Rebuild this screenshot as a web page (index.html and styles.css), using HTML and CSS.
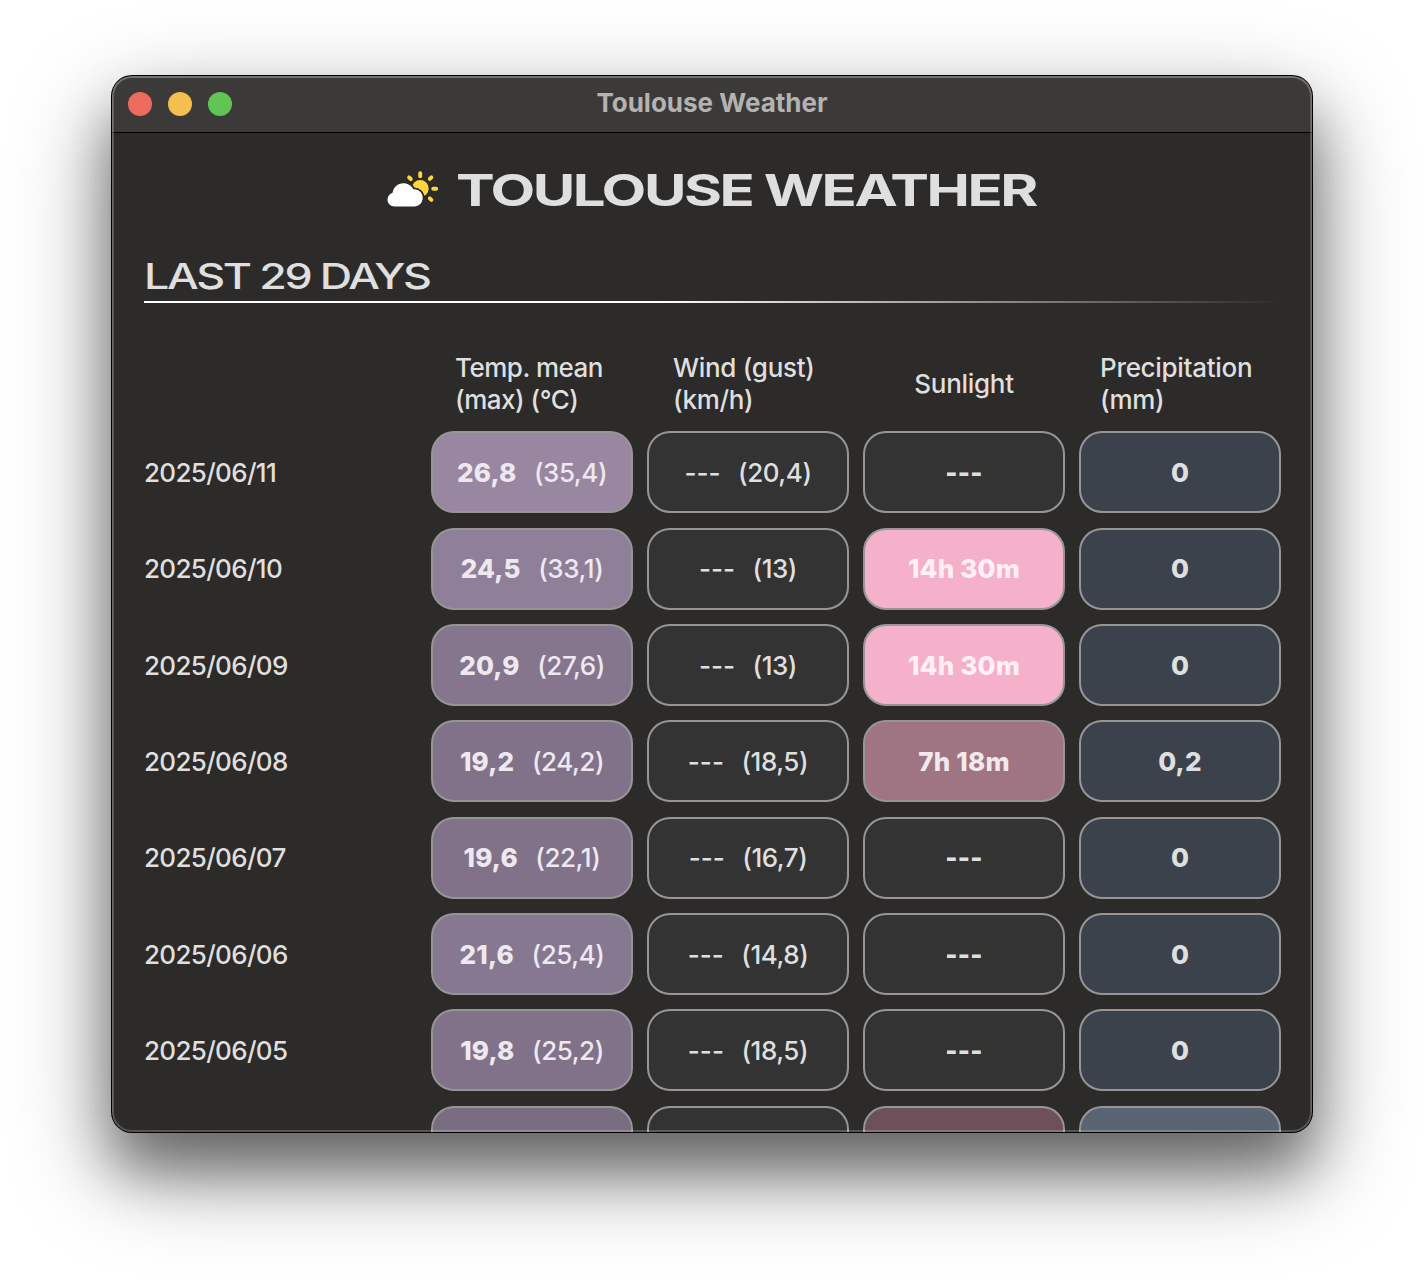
FILE: index.html
```
<!DOCTYPE html>
<html lang="en">
<head>
<meta charset="utf-8">
<title>Toulouse Weather</title>
<link rel="stylesheet" href="styles.css">
</head>
<body>
<main class="window">
  <header class="titlebar">
    <div class="lights"><i class="light close"></i><i class="light minimize"></i><i class="light expand"></i></div>
    <span class="window-title">Toulouse Weather</span>
  </header>
  <section class="content">
    <div class="hero">
      <svg class="hero-icon" width="52" height="38" viewBox="0 0 52 38">
        <g fill="#fcd53f" stroke="#fcd53f">
          <circle cx="33.200" cy="18.500" r="8.500" stroke="none"/>
          <path fill="none" stroke-width="3.900" stroke-linecap="round" d="M33.200 3.200v3M44.400 7.300l-1.600 1.600M46.200 18.700h3M42.800 28.300l1.600 1.600M22.100 7.300l1.700 1.700"/>
        </g>
        <path fill="#fff" stroke="#2c2b29" stroke-width="3.600" paint-order="stroke" d="M7.700 36.500C3.300 36.500.500 33.400.500 29.500c0-3.400 2.100-6 5.100-6.800C6.300 17.200 10.800 13.200 16.400 13.200c4.400 0 8.200 2.400 10 6.200 5.200-.5 9.300 3.400 9.300 8.400 0 4.900-3.700 8.700-8.500 8.700z"/>
      </svg>
      <h1 class="hero-title">TOULOUSE WEATHER</h1>
    </div>
    <div class="section-head"><h2 class="section-title">LAST 29 DAYS</h2></div>
    <div class="head row">
      <span></span>
      <span class="label temp-label">Temp. mean<br>(max) (°C)</span>
      <span class="label wind-label">Wind (gust)<br>(km/h)</span>
      <span class="label sun-label">Sunlight</span>
      <span class="label rain-label">Precipitation<br>(mm)</span>
    </div>
    <div class="days">
      <div class="row"><span class="date">2025/06/11</span><div class="cell t6"><b>26,8</b><span>(35,4)</span></div><div class="cell"><span class="dash">---</span><span>(20,4)</span></div><div class="cell"><b class="dash">---</b></div><div class="cell rain"><b>0</b></div></div>
      <div class="row"><span class="date">2025/06/10</span><div class="cell t5"><b>24,5</b><span>(33,1)</span></div><div class="cell"><span class="dash">---</span><span>(13)</span></div><div class="cell sun"><b>14h 30m</b></div><div class="cell rain"><b>0</b></div></div>
      <div class="row"><span class="date">2025/06/09</span><div class="cell t3"><b>20,9</b><span>(27,6)</span></div><div class="cell"><span class="dash">---</span><span>(13)</span></div><div class="cell sun"><b>14h 30m</b></div><div class="cell rain"><b>0</b></div></div>
      <div class="row"><span class="date">2025/06/08</span><div class="cell t2"><b>19,2</b><span>(24,2)</span></div><div class="cell"><span class="dash">---</span><span>(18,5)</span></div><div class="cell sun-mid"><b>7h 18m</b></div><div class="cell rain"><b>0,2</b></div></div>
      <div class="row"><span class="date">2025/06/07</span><div class="cell t2"><b>19,6</b><span>(22,1)</span></div><div class="cell"><span class="dash">---</span><span>(16,7)</span></div><div class="cell"><b class="dash">---</b></div><div class="cell rain"><b>0</b></div></div>
      <div class="row"><span class="date">2025/06/06</span><div class="cell t4"><b>21,6</b><span>(25,4)</span></div><div class="cell"><span class="dash">---</span><span>(14,8)</span></div><div class="cell"><b class="dash">---</b></div><div class="cell rain"><b>0</b></div></div>
      <div class="row"><span class="date">2025/06/05</span><div class="cell t2"><b>19,8</b><span>(25,2)</span></div><div class="cell"><span class="dash">---</span><span>(18,5)</span></div><div class="cell"><b class="dash">---</b></div><div class="cell rain"><b>0</b></div></div>
      <div class="row"><span></span><div class="cell t1"></div><div class="cell"></div><div class="cell sun-low"></div><div class="cell rain-mid"></div></div>
    </div>
  </section>
</main>
</body>
</html>
```
FILE: styles.css
```
* { box-sizing: border-box; }
html, body { height: 100%; overflow: hidden; }
body {
  margin: 0;
  padding: 76px 112px;
  background: #fff;
  font-family: Inter, "Liberation Sans", sans-serif;
  font-size: 26px;
  font-weight: 460;
  color: #dfdfdf;
}
.window {
  position: relative;
  display: flex;
  flex-direction: column;
  width: 1200px;
  height: 1056px;
  overflow: hidden;
  border-radius: 20px;
  background: #2c2b29;
  box-shadow: 0 0 0 1px #000, 0 38px 56px rgba(0, 0, 0, .4), 0 36px 100px rgba(0, 0, 0, .4);
}
/* light rim along the window edge */
.window::after {
  content: "";
  position: absolute;
  inset: 0;
  border-radius: 20px;
  box-shadow: inset 0 0 0 2px rgba(255, 255, 255, .2), inset 0 1px 0 1px rgba(255, 255, 255, .12);
}
.titlebar {
  display: grid;
  grid-template-columns: 1fr auto 1fr;
  align-items: center;
  flex: none;
  height: 57px;
  padding: 0 16px;
  border-bottom: 1px solid #000;
  background: #3b3a38;
}
.lights { display: flex; gap: 16px; }
.light { width: 24px; height: 24px; border-radius: 50%; }
.close { background: #ed6a5f; }
.minimize { background: #f5bf4f; }
.expand { background: #61c554; }
.window-title {
  font-size: 26px;
  font-weight: 650;
  line-height: 32px;
  color: #b4b3b2;
  padding-bottom: 2px;
}
.content { flex: 1; min-height: 0; padding: 0 31px 0 32px; overflow: hidden; }
.hero { display: flex; padding: 37px 0 0 243px; height: 117px; gap: 17px; }
.hero-icon { flex: none; }
.hero-title {
  margin: -6px 0 0;
  font-size: 44px;
  line-height: 52px;
  font-weight: 700;
  letter-spacing: -1.85px;
  white-space: nowrap;
  transform: scaleX(1.32);
  transform-origin: left;
}
.section-head {
  height: 53px;
  border-bottom: 2px solid;
  border-image: linear-gradient(90deg, #fff 45%, rgba(255, 255, 255, 0)) 1;
}
.section-title {
  width: max-content;
  margin: 0;
  font-size: 35px;
  line-height: 52px;
  font-weight: 450;
  letter-spacing: -1.85px;
  transform: scaleX(1.28);
  transform-origin: left;
}
.row {
  display: grid;
  grid-template-columns: 273px repeat(4, 202px);
  column-gap: 14px;
  align-items: center;
}
.head { height: 64px; margin-top: 49px; margin-bottom: 15.4px; }
.label { line-height: 32px; white-space: nowrap; letter-spacing: -.3px; }
.temp-label { padding-left: 24px; letter-spacing: -.5px; }
.wind-label { padding-left: 26px; }
.sun-label { text-align: center; }
.rain-label { padding-left: 21px; }
.date { letter-spacing: -.68px; }
.days { display: grid; row-gap: 14.33px; }
.days .row { height: 82px; }
.cell {
  display: flex;
  align-items: center;
  justify-content: center;
  gap: 17.5px;
  height: 82px;
  border: 2px solid #969698;
  border-radius: 23px;
  background: #333;
  letter-spacing: -.45px;
  white-space: nowrap;
}
.cell b { font-weight: 770; letter-spacing: .2px; }
.dash { letter-spacing: 0; }
.t6 { background: #9987a2; }
.t5 { background: #8f7f98; }
.t4 { background: #867890; }
.t3 { background: #85758d; }
.t2 { background: #827289; }
.t1 { background: #7a6c81; }
.t1, .t2, .t3, .t4, .t5, .t6 { color: #ede9ef; border-color: #969696; }
.sun { background: #f5b0ca; color: #fff0f5; }
.sun-mid { background: #a07583; color: #f1e9ec; }
.sun-low { background: #6e505a; }
.rain { background: #3c424b; }
.rain-mid { background: #586472; }
```
